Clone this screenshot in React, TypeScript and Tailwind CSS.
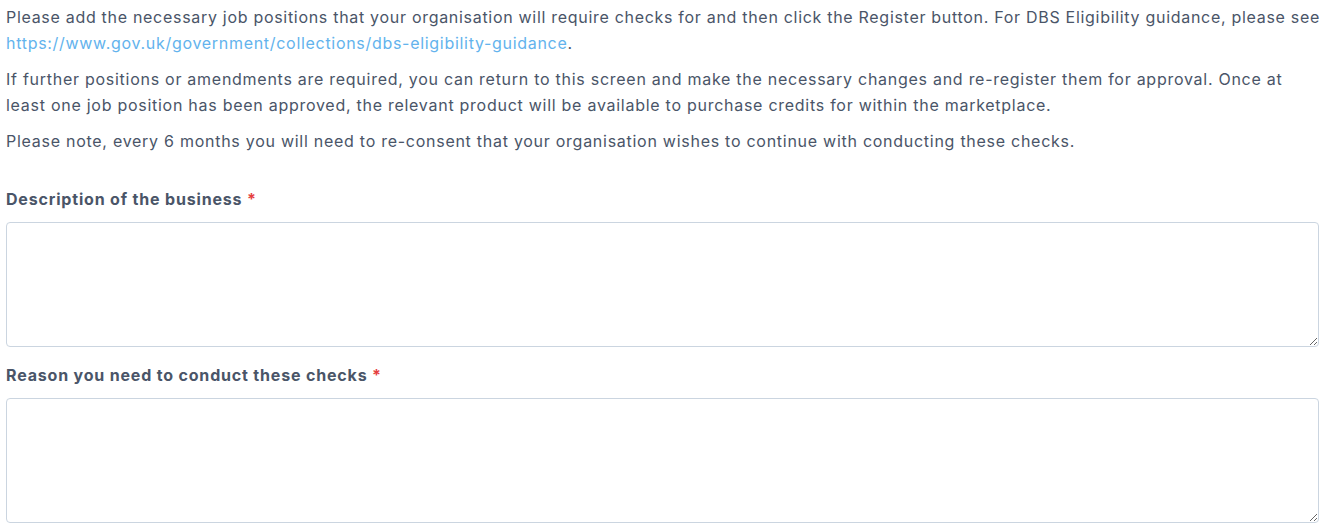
export default function App() {
  return (
    <div className="bg-white pl-[6px] pt-[4px] text-[16px] leading-[26px] tracking-[0.73px] text-[#4a5568]" style={{ fontFamily: "Inter, 'Noto Sans', sans-serif" }}>
      <p className="tracking-[0.7px]">
        Please add the necessary job positions that your organisation will require checks for and then click the Register button. For DBS Eligibility guidance, please see{" "}
        <a href="#" className="text-[#63b3ed]">https://www.gov.uk/government/collections/dbs-eligibility-guidance</a>.
      </p>
      <p className="mt-[10px] pr-[4px]">
        If further positions or amendments are required, you can return to this screen and make the necessary changes and re-register them for approval. Once at least one job position has been approved, the relevant product will be available to purchase credits for within the marketplace.
      </p>
      <p className="mt-[10px] pr-[4px]">
        Please note, every 6 months you will need to re-consent that your organisation wishes to continue with conducting these checks.
      </p>
      <div className="mt-[33px] flex flex-col pr-[4px]">
        <label className="font-bold leading-[24px] tracking-[0.82px] text-[#4a5568]">
          Description of the business <span className="text-[#e53e3e]">*</span>
        </label>
        <textarea className="mt-[11px] h-[125px] w-full rounded-[4px] border border-[#cbd5e0] bg-white p-2 outline-none" />
      </div>
      <div className="mt-[16px] flex flex-col pr-[4px]">
        <label className="font-bold leading-[24px] tracking-[0.82px] text-[#4a5568]">
          Reason you need to conduct these checks <span className="text-[#e53e3e]">*</span>
        </label>
        <textarea className="mt-[11px] h-[125px] w-full rounded-[4px] border border-[#cbd5e0] bg-white p-2 outline-none" />
      </div>
    </div>
  );
}
